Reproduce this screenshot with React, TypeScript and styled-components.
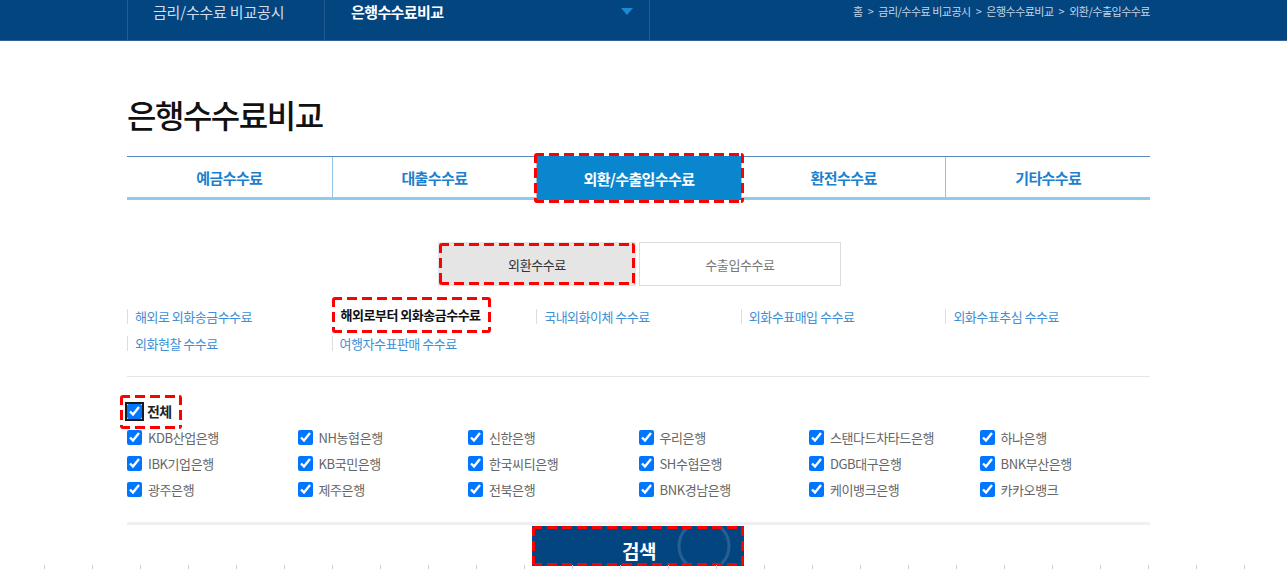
import React from "react"
import styled, { createGlobalStyle, css } from "styled-components"

const GlobalStyle = createGlobalStyle`
  html, body {
    margin: 0;
    padding: 0;
    background: #fff;
    font-family: "Noto Sans CJK KR", "Noto Sans", "Liberation Sans", sans-serif;
    overflow: hidden;
  }
  * { box-sizing: border-box; }
`

// red dashed annotation box drawn over an element
const dash = (dir: string) =>
  `repeating-linear-gradient(${dir}, #ff0000 0 10px, transparent 10px 15px)`

const redMark = (out: number) => css`
  position: relative;
  &::after {
    content: "";
    position: absolute;
    inset: -${out}px;
    pointer-events: none;
    border-radius: 3px;
    background: ${dash("90deg")} top left / 100% 3px no-repeat,
      ${dash("90deg")} bottom left / 100% 3px no-repeat,
      ${dash("180deg")} top left / 3px 100% no-repeat,
      ${dash("180deg")} top right / 3px 100% no-repeat;
  }
`

const Page = styled.div`
  position: relative;
  width: 1287px;
  height: 569px;
  overflow: hidden;
`

const TopBar = styled.header`
  height: 41px;
  background: #03457f;
  border-bottom: 1px solid #2f6399;
`

const Inner = styled.div`
  width: 1023px;
  margin-left: 127px;
`

const TopInner = styled(Inner)`
  display: flex;
  height: 40px;
  border-left: 1px solid #26598f;
`

const TopCell = styled.div<{ $w: number; $strong?: boolean }>`
  position: relative;
  width: ${(p) => p.$w}px;
  border-right: 1px solid #26598f;
  padding: 1px 0 0 ${(p) => (p.$strong ? 26 : 25)}px;
  font-size: 15px;
  line-height: 22px;
  letter-spacing: ${(p) => (p.$strong ? "-0.6px" : "-0.2px")};
  color: ${(p) => (p.$strong ? "#ffffff" : "#d0deee")};
  font-weight: ${(p) => (p.$strong ? 700 : 400)};
`

const Caret = styled.span`
  position: absolute;
  right: 16px;
  top: 8px;
  width: 0;
  height: 0;
  border-left: 6px solid transparent;
  border-right: 6px solid transparent;
  border-top: 7px solid #1b8ad6;
`

const Crumbs = styled.div`
  flex: 1;
  text-align: right;
  font-size: 11px;
  line-height: 22px;
  letter-spacing: -0.5px;
  color: #c7d4e4;
  span { margin: 0 5px; }
`

const Title = styled.h1`
  margin: 52px 0 0;
  font-size: 32px;
  line-height: 42px;
  font-weight: 500;
  letter-spacing: -1.5px;
  color: #111;
`

const Tabs = styled.div`
  display: grid;
  grid-template-columns: repeat(5, 1fr);
  margin-top: 21px;
  border-top: 1px solid #5b8bbd;
  border-bottom: 3px solid #90cbea;
  height: 44px;
`

const Tab = styled.div<{ $active?: boolean; $first?: boolean }>`
  display: flex;
  align-items: center;
  justify-content: center;
  font-size: 15px;
  font-weight: 700;
  letter-spacing: -0.6px;
  color: #1d80cf;
  border-left: ${(p) => (p.$first ? "none" : "1px solid #8fc6e6")};
  ${(p) =>
    p.$active &&
    css`
      background: #0a86cf;
      color: #fff;
      margin-bottom: -3px;
      margin-top: -1px;
      ${redMark(3)}
    `}
`

const Toggle = styled.div`
  display: flex;
  justify-content: center;
  margin-top: 42px;
  gap: 3px;
  padding-left: 2px;
`

const ToggleBtn = styled.div<{ $on?: boolean }>`
  width: ${(p) => (p.$on ? 198 : 202)}px;
  height: 44px;
  display: flex;
  align-items: center;
  justify-content: center;
  font-size: 13px;
  letter-spacing: -0.4px;
  color: ${(p) => (p.$on ? "#333" : "#777")};
  background: ${(p) => (p.$on ? "#e5e5e5" : "#fff")};
  border: 1px solid ${(p) => (p.$on ? "#e5e5e5" : "#dcdcdc")};
  ${(p) => p.$on && redMark(0)}
`

const Links = styled.div`
  display: grid;
  grid-template-columns: repeat(5, 1fr);
  grid-auto-rows: 27px;
  margin-top: 17px;
`

const LinkItem = styled.div<{ $active?: boolean }>`
  display: flex;
  align-items: center;
  font-size: 13px;
  letter-spacing: -0.5px;
  color: ${(p) => (p.$active ? "#111" : "#3c8fd6")};
  font-weight: ${(p) => (p.$active ? 700 : 400)};
  &::before {
    content: "";
    width: 1px;
    height: 15px;
    background: ${(p) => (p.$active ? "transparent" : "#dedede")};
    margin-right: 7px;
  }
  ${(p) =>
    p.$active &&
    css`
      width: 159px;
      height: 36px;
      align-self: center;
      margin-top: -4px;
      &::before { margin-right: 8px; }
      ${redMark(0)}
    `}
`

const Divider = styled.hr<{ $thick?: boolean }>`
  margin: ${(p) => (p.$thick ? "20px 0 0" : "19px 0 0")};
  border: none;
  height: ${(p) => (p.$thick ? 3 : 1)}px;
  background: ${(p) => (p.$thick ? "#f0f0f0" : "#e6e6e6")};
`

const AllRow = styled.label`
  display: inline-flex;
  align-items: center;
  gap: 5px;
  height: 26px;
  margin-top: 21px;
  font-size: 14px;
  font-weight: 700;
  letter-spacing: -0.6px;
  color: #222;
  ${redMark(0)}
  &::after {
    inset: -3px -10px -5px -7px;
  }
`

const Check = styled.input.attrs({ type: "checkbox" })<{ $focus?: boolean }>`
  width: 15px;
  height: 15px;
  margin: 0;
  accent-color: #0075ff;
  ${(p) =>
    p.$focus &&
    css`
      outline: 2px solid #1a1a1a;
      outline-offset: 0;
      border-radius: 3px;
    `}
`

const Banks = styled.div`
  display: grid;
  grid-template-columns: repeat(6, 1fr);
  grid-auto-rows: 26px;
`

const Bank = styled.label`
  display: flex;
  align-items: center;
  gap: 6px;
  font-size: 13px;
  letter-spacing: -0.4px;
  color: #666;
`

const SearchWrap = styled.div`
  display: flex;
  justify-content: center;
  margin-top: 1px;
  padding-right: 1px;
`

const SearchBtn = styled.button`
  width: 212px;
  height: 40px;
  border: none;
  background: #03457f;
  color: #fff;
  font-family: inherit;
  font-size: 19px;
  font-weight: 700;
  letter-spacing: -0.5px;
  padding: 9px 0 0 2px;
  ${redMark(0)}
  svg {
    position: absolute;
    right: 10px;
    top: 0;
  }
`

const Ruler = styled.div`
  position: absolute;
  left: 44px;
  bottom: 0;
  display: flex;
  gap: 47px;
  pointer-events: none;
  span {
    width: 1px;
    height: 4px;
    background: #c6cfe0;
  }
`

const tabs = ["예금수수료", "대출수수료", "외환/수출입수수료", "환전수수료", "기타수수료"]

const links = [
  "해외로 외화송금수수료",
  "해외로부터 외화송금수수료",
  "국내외화이체 수수료",
  "외화수표매입 수수료",
  "외화수표추심 수수료",
  "외화현찰 수수료",
  "여행자수표판매 수수료",
]

const banks = [
  "KDB산업은행", "NH농협은행", "신한은행", "우리은행", "스탠다드차타드은행", "하나은행",
  "IBK기업은행", "KB국민은행", "한국씨티은행", "SH수협은행", "DGB대구은행", "BNK부산은행",
  "광주은행", "제주은행", "전북은행", "BNK경남은행", "케이뱅크은행", "카카오뱅크",
]

export default function App() {
  return (
    <Page>
      <GlobalStyle />
      <TopBar>
        <TopInner>
          <TopCell $w={197}>금리/수수료 비교공시</TopCell>
          <TopCell $w={325} $strong>
            은행수수료비교
            <Caret />
          </TopCell>
          <Crumbs>
            홈<span>&gt;</span>금리/수수료 비교공시<span>&gt;</span>은행수수료비교<span>&gt;</span>외환/수출입수수료
          </Crumbs>
        </TopInner>
      </TopBar>

      <Inner>
        <Title>은행수수료비교</Title>

        <Tabs>
          {tabs.map((t, i) => (
            <Tab key={t} $first={i === 0} $active={i === 2}>
              {t}
            </Tab>
          ))}
        </Tabs>

        <Toggle>
          <ToggleBtn $on>외환수수료</ToggleBtn>
          <ToggleBtn>수출입수수료</ToggleBtn>
        </Toggle>

        <Links>
          {links.map((l, i) => (
            <LinkItem key={l} $active={i === 1}>
              {l}
            </LinkItem>
          ))}
        </Links>

        <Divider />

        <AllRow>
          <Check defaultChecked $focus />
          전체
        </AllRow>

        <Banks>
          {banks.map((b) => (
            <Bank key={b}>
              <Check defaultChecked />
              {b}
            </Bank>
          ))}
        </Banks>

        <Divider $thick />

        <SearchWrap>
          <SearchBtn>
            검색
            <svg width="60" height="40" viewBox="0 0 60 40">
              <circle cx="30" cy="20" r="25" fill="none" stroke="rgba(255,255,255,0.14)" strokeWidth="3" />
            </svg>
          </SearchBtn>
        </SearchWrap>
      </Inner>

      <Ruler>
        {Array.from({ length: 26 }).map((_, i) => (
          <span key={i} />
        ))}
      </Ruler>
    </Page>
  )
}
